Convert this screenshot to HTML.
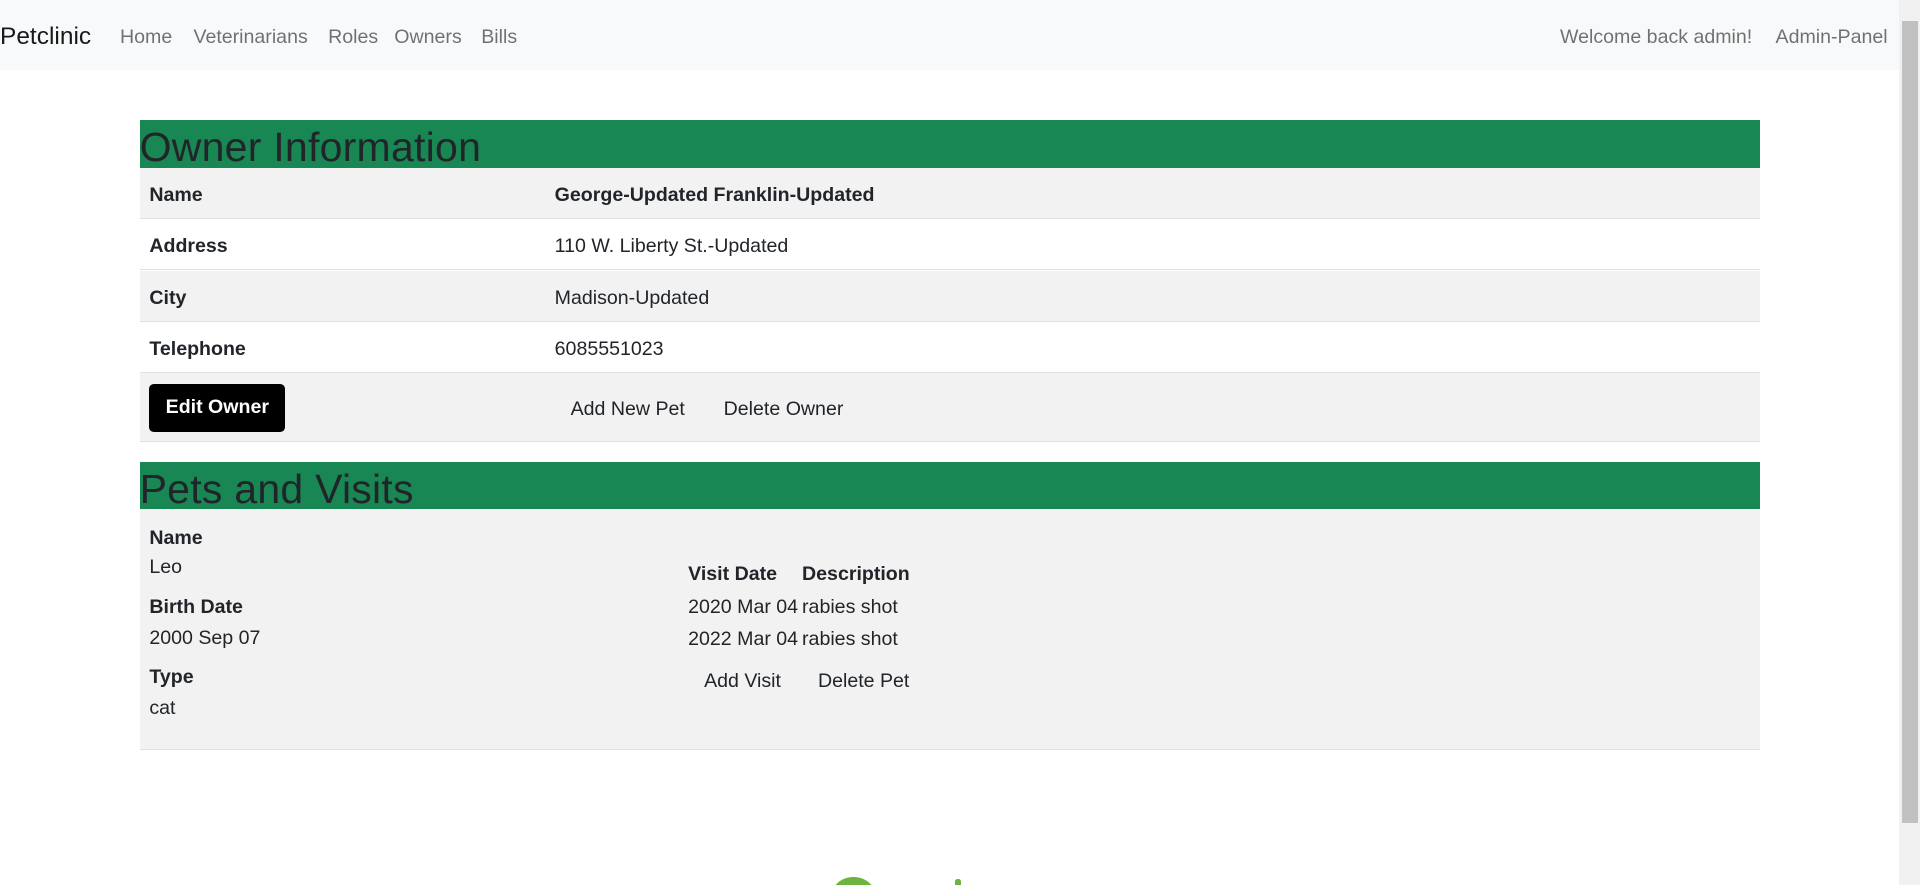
<!DOCTYPE html>
<html><head><meta charset="utf-8"><style>
html,body{margin:0;padding:0;overflow:hidden;background:#fff}
#w{zoom:1.2245;width:1568px;height:723px;position:relative;font-family:"Liberation Sans",Arial,sans-serif;font-size:16px;color:#212529;overflow:hidden}
.nav{position:absolute;left:0;top:0;width:1551px;height:57px;background:#f8f9fa}
.nav span{position:absolute;top:1px;line-height:59px;color:rgba(0,0,0,.55);font-size:16px;white-space:nowrap}
.nav .brand{font-size:20px;color:rgba(0,0,0,.9);left:0}
.c{position:absolute;left:114px;width:1323px}
.hd{background:#198754;height:39px;font-size:33.5px;line-height:45px;color:#212529;overflow:hidden;white-space:nowrap;letter-spacing:0.2px}
.row{position:absolute;left:0;width:1323px;border-bottom:1px solid #dee2e6}
.row span{position:absolute;white-space:nowrap}
.g{background:#f2f2f2}
b{font-weight:bold}
.btn{position:absolute;left:8px;top:9px;width:111px;height:39px;background:#000;color:#fff;border-radius:4px;font-weight:bold;text-align:center;line-height:39px}
.sb{position:absolute;left:1551px;top:0;width:17px;height:723px;background:#f1f1f1}
.th{position:absolute;left:2px;top:17px;width:13px;height:655px;background:#c1c1c1}
</style></head><body><div id="w">
<div class="nav">
<span class="brand">Petclinic</span>
<span style="left:98px">Home</span>
<span style="left:158px">Veterinarians</span>
<span style="left:268px">Roles</span>
<span style="left:322px">Owners</span>
<span style="left:393px">Bills</span>
<span style="left:1274px">Welcome back admin!</span>
<span style="left:1450px">Admin-Panel</span>
</div>
<div class="c" style="top:98px"><div class="hd">Owner Information</div></div>
<div class="c" style="top:137px;height:224px">
<div class="row g" style="top:0;height:41px"><span style="left:8px;top:13px"><b>Name</b></span><span style="left:339px;top:13px"><b>George-Updated Franklin-Updated</b></span></div>
<div class="row" style="top:42px;height:41px"><span style="left:8px;top:13px"><b>Address</b></span><span style="left:339px;top:13px">110 W. Liberty St.-Updated</span></div>
<div class="row g" style="top:84px;height:41px"><span style="left:8px;top:13px"><b>City</b></span><span style="left:339px;top:13px">Madison-Updated</span></div>
<div class="row" style="top:126px;height:41px"><span style="left:8px;top:13px"><b>Telephone</b></span><span style="left:339px;top:13px">6085551023</span></div>
<div class="row g" style="top:168px;height:55px"><div class="btn">Edit Owner</div><span style="left:352px;top:20px">Add New Pet</span><span style="left:477px;top:20px">Delete Owner</span></div>
</div>
<div class="c" style="top:377px"><div class="hd">Pets and Visits</div></div>
<div class="c g" style="top:416px;height:196px;border-bottom:1px solid #dee2e6">
<span style="position:absolute;left:8px;top:14px"><b>Name</b></span>
<span style="position:absolute;left:8px;top:38px">Leo</span>
<span style="position:absolute;left:8px;top:71px"><b>Birth Date</b></span>
<span style="position:absolute;left:8px;top:96px">2000 Sep 07</span>
<span style="position:absolute;left:8px;top:128px"><b>Type</b></span>
<span style="position:absolute;left:8px;top:153px">cat</span>
<span style="position:absolute;left:448px;top:44px"><b>Visit Date</b></span>
<span style="position:absolute;left:541px;top:44px"><b>Description</b></span>
<span style="position:absolute;left:448px;top:71px">2020 Mar 04</span>
<span style="position:absolute;left:541px;top:71px">rabies shot</span>
<span style="position:absolute;left:448px;top:97px">2022 Mar 04</span>
<span style="position:absolute;left:541px;top:97px">rabies shot</span>
<span style="position:absolute;left:461px;top:131px">Add Visit</span>
<span style="position:absolute;left:554px;top:131px">Delete Pet</span>
</div>
<div style="position:absolute;left:678px;top:716px;width:38px;height:38px;border-radius:50%;background:#6db33f"></div>
<div style="position:absolute;left:780px;top:718px;width:5px;height:10px;background:#6db33f;border-radius:2px"></div>
<div class="sb"><div class="th"></div></div>
</div></body></html>
